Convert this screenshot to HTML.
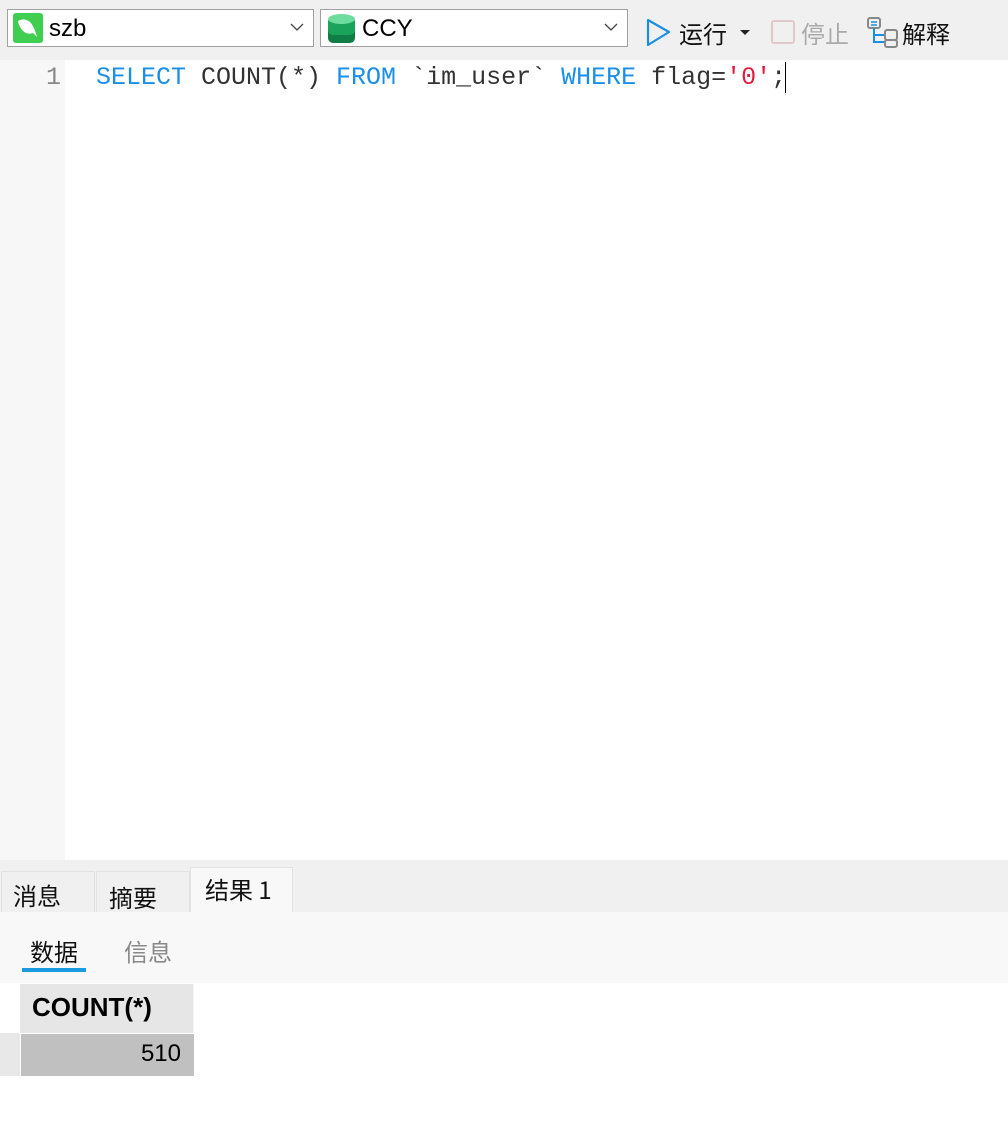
<!DOCTYPE html>
<html><head><meta charset="utf-8"><style>
body{margin:0;width:1008px;height:1126px;background:#fff;position:relative;overflow:hidden;font-family:"Liberation Sans","Noto Sans CJK SC",sans-serif}
.a{position:absolute}
.combo{position:absolute;top:9px;height:36px;background:#fff;border:1px solid #a0a0a0}
.cjk{font-family:"Noto Sans CJK SC",sans-serif}
.mono{font-family:"Liberation Mono",monospace;font-size:25px;white-space:pre}
</style></head><body>
<div class="a" style="left:0;top:0;width:1008px;height:60px;background:#f0f0f0"></div>
<div class="combo" style="left:7px;width:305px">
 <div class="a" style="left:5px;top:3px;width:30px;height:30px;background:#3fce4f;border-radius:3px"></div>
 <svg class="a" style="left:5px;top:3px" width="30" height="30"><path d="M5 8 Q12 4 18 10 Q22 16 24 24 L20 20 Q14 22 10 18 Q6 14 5 8Z" fill="#fff"/></svg>
 <div class="a" style="left:41px;top:5px;font-size:24px">szb</div>
 <svg class="a" style="left:282px;top:13px" width="14" height="9"><path d="M1 1 L7 7 L13 1" stroke="#444" fill="none" stroke-width="1.3"/></svg>
</div>
<div class="combo" style="left:320px;width:306px">
 <svg class="a" style="left:6px;top:3px" width="30" height="32"><rect x="1" y="4" width="27" height="26" rx="5" fill="#0f7d45"/><rect x="1" y="4" width="27" height="18" rx="5" fill="#1aa35a"/><ellipse cx="14.5" cy="6" rx="13.5" ry="5" fill="#6fdc9f"/></svg>
 <div class="a" style="left:41px;top:5px;font-size:24px">CCY</div>
 <svg class="a" style="left:283px;top:13px" width="14" height="9"><path d="M1 1 L7 7 L13 1" stroke="#444" fill="none" stroke-width="1.3"/></svg>
</div>
<svg class="a" style="left:646px;top:18px" width="26" height="30"><path d="M2 2 L23 14 L2 27Z" fill="none" stroke="#1a8fe0" stroke-width="2.2" stroke-linejoin="round"/></svg>
<div class="a cjk" style="left:679px;top:15px;font-size:24px;color:#111">运行</div>
<svg class="a" style="left:740px;top:30px" width="10" height="6"><path d="M0 0 L10 0 L5 5Z" fill="#222"/></svg>
<div class="a" style="left:771px;top:20px;width:20px;height:20px;border:2px solid #e0c8c8;border-radius:3px"></div>
<div class="a cjk" style="left:801px;top:15px;font-size:24px;color:#aaa">停止</div>
<svg class="a" style="left:866px;top:16px" width="36" height="32"><rect x="2" y="2" width="12" height="10" rx="2" fill="none" stroke="#888" stroke-width="2"/><path d="M5 6h6M5 9h6" stroke="#1a8fe0" stroke-width="1.5"/><path d="M8 12 V26 H19 M8 19 H19" stroke="#1a8fe0" stroke-width="2" fill="none"/><rect x="19" y="14" width="12" height="10" rx="2" fill="none" stroke="#888" stroke-width="2"/><rect x="19" y="24" width="12" height="7" rx="2" fill="none" stroke="#888" stroke-width="2"/></svg>
<div class="a cjk" style="left:902px;top:15px;font-size:24px;color:#111">解释</div>
<div class="a" style="left:0;top:60px;width:65px;height:800px;background:#f7f7f7"></div>
<div class="a mono" style="left:46px;top:63px;color:#888">1</div>
<div class="a mono" style="left:96px;top:63px;color:#333"><span style="color:#1a8fe8">SELECT</span> COUNT(*) <span style="color:#1a8fe8">FROM</span> `im_user` <span style="color:#1a8fe8">WHERE</span> flag=<span style="color:#e8193c">'0'</span>;</div>
<div class="a" style="left:785px;top:62px;width:1px;height:31px;background:#000"></div>
<div class="a" style="left:0;top:860px;width:1008px;height:52px;background:#f0f0f0"></div>
<div class="a cjk" style="left:1px;top:871px;width:94px;height:41px;border:1px solid #e2e2e2;border-bottom:none;font-size:24px;color:#111;box-sizing:border-box;padding:5px 0 0 11px">消息</div>
<div class="a cjk" style="left:96px;top:871px;width:94px;height:41px;border:1px solid #e2e2e2;border-bottom:none;font-size:24px;color:#111;box-sizing:border-box;padding:7px 0 0 12px">摘要</div>
<div class="a cjk" style="left:190px;top:867px;width:103px;height:46px;background:#f8f8f8;border:1px solid #e2e2e2;border-bottom:none;font-size:24px;color:#111;box-sizing:border-box;padding:3px 0 0 14px">结果 1</div>
<div class="a" style="left:0;top:912px;width:1008px;height:71px;background:#f8f8f8"></div>
<div class="a cjk" style="left:30px;top:933px;font-size:24px;color:#111">数据</div>
<div class="a" style="left:22px;top:968px;width:64px;height:4px;background:#1a9be0"></div>
<div class="a cjk" style="left:124px;top:933px;font-size:24px;color:#888">信息</div>
<div class="a" style="left:20px;top:984px;width:174px;height:49px;background:#e6e6e6;box-sizing:border-box;border-right:1px solid #f4f4f4;font-size:26px;font-weight:bold;padding:8px 0 0 12px">COUNT(*)</div>
<div class="a" style="left:0;top:1033px;width:20px;height:43px;background:#e8e8e8"></div>
<div class="a" style="left:21px;top:1034px;width:173px;height:42px;background:#c0c0c0;font-size:24px;text-align:right;box-sizing:border-box;padding:6px 13px 0 0">510</div>
</body></html>
